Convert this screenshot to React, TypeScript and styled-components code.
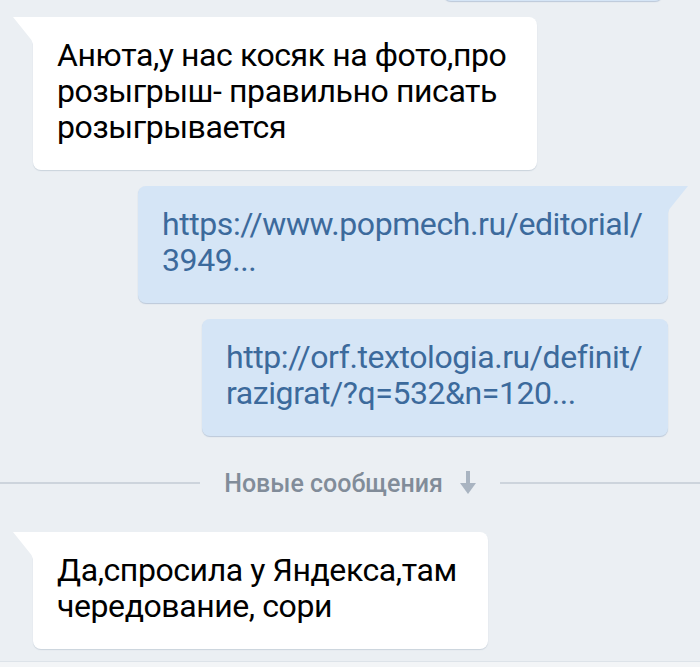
import React from "react";
import styled, { createGlobalStyle, css } from "styled-components";

const Global = createGlobalStyle`
  html, body { margin: 0; padding: 0; }
  body {
    background: #ebeff3;
    font-family: Roboto, "Noto Sans", "Liberation Sans", sans-serif;
    -webkit-font-smoothing: antialiased;
  }
`;

const Page = styled.div`
  width: 700px;
  height: 667px;
  overflow: hidden;
  box-sizing: border-box;
  display: flex;
  flex-direction: column;
  padding: 0 32px 0 33px;
  background: #ebeff3;
`;

const Row = styled.div<{ $side: "in" | "out"; $mt?: number }>`
  display: flex;
  justify-content: ${(p) => (p.$side === "in" ? "flex-start" : "flex-end")};
  margin-top: ${(p) => p.$mt ?? 16}px;
`;

const Bubble = styled.div<{ $side: "in" | "out"; $w: number; $tail?: boolean }>`
  position: relative;
  box-sizing: border-box;
  width: ${(p) => p.$w}px;
  padding: 20px 24px 25px;
  border-radius: 8px;
  font-size: 32px;
  line-height: 36px;
  letter-spacing: -0.42px;
  white-space: nowrap;
  ${(p) =>
    p.$side === "in"
      ? css`
          background: #ffffff;
          color: #000000;
          box-shadow: 0 1px 1px rgba(120, 140, 160, 0.28);
        `
      : css`
          background: #d5e5f6;
          color: #3c6a9c;
          box-shadow: 0 1px 1px rgba(100, 130, 170, 0.35);
        `}
  ${(p) =>
    p.$tail &&
    (p.$side === "in"
      ? css`
          border-top-left-radius: 0;
          &::before {
            content: "";
            position: absolute;
            top: 0;
            left: -20px;
            width: 21px;
            height: 27px;
            background: #ffffff;
            clip-path: polygon(0 0, 100% 0, 100% 100%, 95% 100%, 88% 85%);
          }
        `
      : css`
          border-top-right-radius: 0;
          &::before {
            content: "";
            position: absolute;
            top: 0;
            right: -20px;
            width: 21px;
            height: 27px;
            background: #d5e5f6;
            clip-path: polygon(100% 0, 0 0, 0 100%, 5% 100%, 12% 85%);
          }
        `)}
`;

const Edge = styled(Bubble)`
  height: 60px;
  margin-top: -59px;
  margin-right: 5px;
`;

const Line = styled.div``;

const Divider = styled.div`
  display: flex;
  align-items: center;
  margin: 27px -32px 0 -33px;
  height: 40px;
`;

const Rule = styled.div`
  flex: 1;
  height: 2px;
  background: #cdd4dc;
`;

const DividerLabel = styled.div`
  display: flex;
  align-items: center;
  gap: 17px;
  padding: 0 24px;
  font-size: 25px;
  font-weight: 500;
  color: #818c99;
`;

const Arrow = () => (
  <svg width="16" height="24" viewBox="0 0 16 24" fill="#a9b4c1">
    <rect x="6" y="0" width="4" height="14" />
    <polygon points="0,12 16,12 8,23" />
  </svg>
);

const Footer = styled.div`
  margin: auto -32px 0 -33px;
  height: 5px;
  border-top: 1px solid #dde3e9;
  background: #f3f5f7;
`;

export default function App() {
  return (
    <>
      <Global />
      <Page>
        <Row $side="out" $mt={0}>
          <Edge $side="out" $w={220} />
        </Row>
        <Row $side="in">
          <Bubble $side="in" $w={504} $tail>
            <Line>Анюта,у нас косяк на фото,про</Line>
            <Line>розыгрыш- правильно писать</Line>
            <Line>розыгрывается</Line>
          </Bubble>
        </Row>
        <Row $side="out">
          <Bubble $side="out" $w={530} $tail>
            <Line>https://www.popmech.ru/editorial/</Line>
            <Line>3949...</Line>
          </Bubble>
        </Row>
        <Row $side="out">
          <Bubble $side="out" $w={466}>
            <Line>http://orf.textologia.ru/definit/</Line>
            <Line>razigrat/?q=532&amp;n=120...</Line>
          </Bubble>
        </Row>
        <Divider>
          <Rule />
          <DividerLabel>
            Новые сообщения <Arrow />
          </DividerLabel>
          <Rule />
        </Divider>
        <Row $side="in" $mt={29}>
          <Bubble $side="in" $w={455} $tail>
            <Line>Да,спросила у Яндекса,там</Line>
            <Line>чередование, сори</Line>
          </Bubble>
        </Row>
        <Footer />
      </Page>
    </>
  );
}
